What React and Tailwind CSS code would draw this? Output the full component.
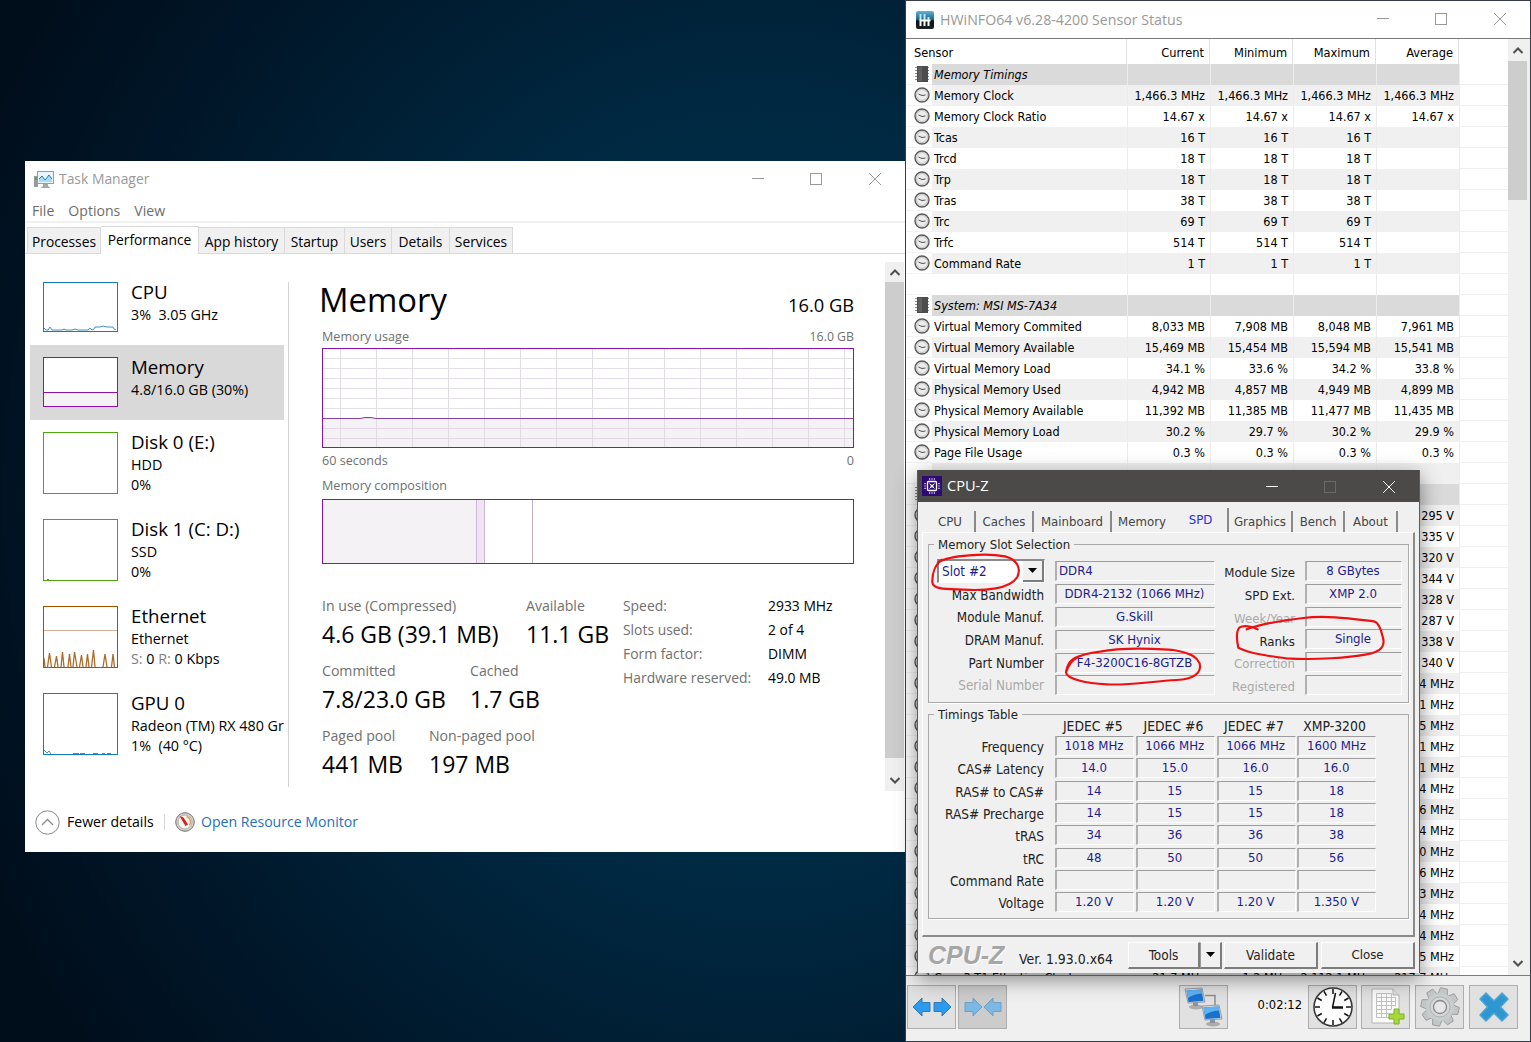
const tabs = [
  { label: 'Processes', width: 'w-[74px]' },
  { label: 'Performance', width: 'w-[98px]', active: true },
  { label: 'App history', width: 'w-[86px]' },
  { label: 'Startup', width: 'w-[60px]' },
  { label: 'Users', width: 'w-[47px]' },
  { label: 'Details', width: 'w-[58px]' },
  { label: 'Services', width: 'w-[63px]' },
];

// values: current, minimum, maximum, average
const sensorRows = [
  { header: true, name: 'Memory Timings' },
  { name: 'Memory Clock', values: ['1,466.3 MHz', '1,466.3 MHz', '1,466.3 MHz', '1,466.3 MHz'] },
  { name: 'Memory Clock Ratio', values: ['14.67 x', '14.67 x', '14.67 x', '14.67 x'] },
  { name: 'Tcas', values: ['16 T', '16 T', '16 T', ''] },
  { name: 'Trcd', values: ['18 T', '18 T', '18 T', ''] },
  { name: 'Trp', values: ['18 T', '18 T', '18 T', ''] },
  { name: 'Tras', values: ['38 T', '38 T', '38 T', ''] },
  { name: 'Trc', values: ['69 T', '69 T', '69 T', ''] },
  { name: 'Trfc', values: ['514 T', '514 T', '514 T', ''] },
  { name: 'Command Rate', values: ['1 T', '1 T', '1 T', ''] },
  { blank: true },
  { header: true, name: 'System: MSI MS-7A34' },
  { name: 'Virtual Memory Commited', values: ['8,033 MB', '7,908 MB', '8,048 MB', '7,961 MB'] },
  { name: 'Virtual Memory Available', values: ['15,469 MB', '15,454 MB', '15,594 MB', '15,541 MB'] },
  { name: 'Virtual Memory Load', values: ['34.1 %', '33.6 %', '34.2 %', '33.8 %'] },
  { name: 'Physical Memory Used', values: ['4,942 MB', '4,857 MB', '4,949 MB', '4,899 MB'] },
  { name: 'Physical Memory Available', values: ['11,392 MB', '11,385 MB', '11,477 MB', '11,435 MB'] },
  { name: 'Physical Memory Load', values: ['30.2 %', '29.7 %', '30.2 %', '29.9 %'] },
  { name: 'Page File Usage', values: ['0.3 %', '0.3 %', '0.3 %', '0.3 %'] },
  { blank: true },
  { header: true, name: '' },
  ...['295 V', '335 V', '320 V', '344 V', '328 V', '287 V', '338 V', '340 V',
    '4 MHz', '1 MHz', '5 MHz', '1 MHz', '1 MHz', '4 MHz', '6 MHz', '4 MHz',
    '0 MHz', '6 MHz', '3 MHz', '4 MHz', '4 MHz', '5 MHz'].map(v => ({ name: '', values: ['', '', '', v] })),
  { name: 'Core 3 T1 Effective Clock', values: ['21.7 MHz', '1.2 MHz', '2,112.1 MHz', '217.7 MHz'] },
];

const cpuzTabs = [
  { label: 'CPU', width: 'w-[50px]' },
  { label: 'Caches', width: 'w-[58px]' },
  { label: 'Mainboard', width: 'w-[78px]' },
  { label: 'Memory', width: 'w-[62px]' },
  { label: 'SPD', width: 'w-[55px]', active: true },
  { label: 'Graphics', width: 'w-[64px]' },
  { label: 'Bench', width: 'w-[52px]' },
  { label: 'About', width: 'w-[53px]' },
];

const slotRows = [
  ['Max Bandwidth', 'DDR4-2132 (1066 MHz)'],
  ['Module Manuf.', 'G.Skill'],
  ['DRAM Manuf.', 'SK Hynix'],
  ['Part Number', 'F4-3200C16-8GTZB'],
  ['Serial Number', '', true],
];

const moduleRows = [
  ['Module Size', '8 GBytes'],
  ['SPD Ext.', 'XMP 2.0'],
  ['Week/Year', '', true],
  ['Ranks', 'Single'],
  ['Correction', '', true],
  ['Registered', '', true],
];

const timings = [
  ['Frequency', '1018 MHz', '1066 MHz', '1066 MHz', '1600 MHz'],
  ['CAS# Latency', '14.0', '15.0', '16.0', '16.0'],
  ['RAS# to CAS#', '14', '15', '15', '18'],
  ['RAS# Precharge', '14', '15', '15', '18'],
  ['tRAS', '34', '36', '36', '38'],
  ['tRC', '48', '50', '50', '56'],
  ['Command Rate', '', '', '', ''],
  ['Voltage', '1.20 V', '1.20 V', '1.20 V', '1.350 V'],
];

function WindowControls({ className, dimMax }) {
  return (
    <div className={`flex gap-[46.5px] ${className}`}>
      <svg width="12" height="12" stroke="currentColor" fill="none"><path d="M0 5.5H12" /></svg>
      <svg width="12" height="12" stroke={dimMax ? '#6b6a68' : 'currentColor'} fill="none" className="relative -left-[0.5px]"><rect x="0.5" y="0.5" width="11" height="11" /></svg>
      <svg width="12" height="12" stroke="currentColor" fill="none"><path d="M0 0L12 12M12 0L0 12" /></svg>
    </div>
  );
}

function Chevron({ up }) {
  return (
    <svg width="10" height="7" fill="none" stroke="#505050" strokeWidth="2">
      <path d={up ? 'M0.5 6L5 1.5L9.5 6' : 'M0.5 1L5 5.5L9.5 1'} />
    </svg>
  );
}

function SideItem({ title, lines, color, tall, selected, children }) {
  return (
    <div className={`flex w-[254px] gap-[13px] pl-[13px] pt-3 whitespace-nowrap ${tall ? 'h-[87px]' : 'h-[75px]'} ${selected ? 'bg-[#d9d9d9]' : ''}`}>
      <svg width="75" height={tall ? 62 : 50} className="shrink-0" fill="none">
        <rect x="0.5" y="0.5" width="74" height={tall ? 61 : 49} fill="#fff" stroke={color} />
        {children}
      </svg>
      <div>
        <div className="text-[18.7px] leading-5 mb-[3px]">{title}</div>
        {lines.map((line, i) => <div key={i} className="text-[14.3px] leading-5 whitespace-pre">{line}</div>)}
      </div>
    </div>
  );
}

function Stat({ label, value, width }) {
  return (
    <div className={width}>
      <div className="text-[14.1px] leading-5 text-[#707070]">{label}</div>
      <div className="text-[23px] leading-[37px]">{value}</div>
    </div>
  );
}

function TaskManager() {
  return (
    <div className="absolute left-[25px] top-[161px] w-[881px] h-[691px] bg-white text-black font-['Open_Sans','Noto_Sans',sans-serif] flex flex-col whitespace-nowrap overflow-hidden">
      <div className="h-[37px] shrink-0 flex items-center pl-[9px] pr-[25px] text-[#999]">
        <svg width="20" height="18" viewBox="0 0 20 18">
          <rect x="0" y="5" width="4" height="11" fill="#9a9a9a" />
          <rect x="1" y="6" width="2" height="3" fill="#4caf50" />
          <rect x="3.5" y="0.5" width="16" height="12" fill="#e8f6fc" stroke="#9b9b9b" />
          <path d="M5 8l3-3 3 4 4-5 3 4v3H5z" fill="#a9dcf2" />
          <path d="M5 8l3-3 3 4 4-5 3 4" fill="none" stroke="#2a7db5" />
          <path d="M9 13h5v2l2.5 2h-10l2.5-2z" fill="#a8a8a8" />
        </svg>
        <span className="ml-[5px] text-[13.9px]">Task Manager</span>
        <WindowControls className="ml-auto relative top-[-1px]" />
      </div>
      <div className="h-[25px] shrink-0 flex items-center gap-[14px] pl-[7px] pt-[2px] text-[14.1px] text-[#6d6d6d] border-b-2 border-[#f0f0f0]">
        <span>File</span><span>Options</span><span>View</span>
      </div>
      <div className="h-[31px] shrink-0 flex items-end pl-[2px] border-b border-[#d9d9d9]">
        {tabs.map(t => (
          <div key={t.label} className={`${t.width} flex justify-center text-[13.8px] border-t border-r border-[#d9d9d9] ${t.active ? 'h-7 bg-white leading-[26px] -mb-px pb-px' : 'h-[26px] bg-[#f0f0f0] leading-[27px] first:border-l'}`}>{t.label}</div>
        ))}
      </div>

      <div className="flex h-[538px] shrink-0">
        {/* Resource list */}
        <div className="w-[263px] shrink-0 pt-4 pl-[5px] overflow-hidden">
          <SideItem title="CPU" lines={['3%  3.05 GHz']} color="#117dbb">
            <path d="M1 46l2 2 2 0 2-3 2 3 10 0 2-1 2 1h6l3-1 3 1h10l2-2 2 2 2-1 1-2h5l3-1 4 1h6l1 2 2 1" stroke="#3c93c4" />
          </SideItem>
          <SideItem title="Memory" lines={['4.8/16.0 GB (30%)']} color="#8b12ae" selected>
            <rect x="1" y="36" width="73" height="13" fill="#f4f2f4" />
            <path d="M1 35.5H74" stroke="#8b12ae" />
          </SideItem>
          <SideItem title="Disk 0 (E:)" lines={['HDD', '0%']} color="#4da60c" tall />
          <SideItem title="Disk 1 (C: D:)" lines={['SSD', '0%']} color="#4da60c" tall>
            <path d="M4 60.5h2" stroke="#4da60c" />
          </SideItem>
          <SideItem
            title="Ethernet"
            lines={['Ethernet', <><span className="text-[#808080]">S:</span> 0 <span className="text-[#808080]">R:</span> 0 Kbps</>]}
            color="#a74f01"
            tall
          >
            <path d="M1 24.5H74" stroke="#cfae9b" />
            <path
              d="M1 52l1 9M4.5 61l2-14 2 14M11.500 61l2-11 1.500 11M18 61l1.500-15L21 61M25 61l1.500-13L28 61M30 61l1.500-15L34 61M36.500 61l2-12 1.500 12M43 61l1.500-13L46 61M48.500 61l2-17 1.500 17M60 61l2-13 2 13M68.500 61l1.500-13 1.500 13"
              stroke="#b06a2c"
              strokeWidth="1.3"
            />
          </SideItem>
          <SideItem title="GPU 0" lines={['Radeon (TM) RX 480 Gr', '1%  (40 °C)']} color="#117dbb" tall>
            <path d="M1 57l3 3 2-2 2 3M30 60.5h6M37 60.5h5M50 60.5h5M59 60.5h3M64 60.5h4" stroke="#3c93c4" />
          </SideItem>
        </div>
        <div className="w-px h-[505px] mt-7 bg-[#d4d4d4]"></div>

        {/* Memory details */}
        <div className="w-[572px] pl-[33px] pr-[7px]">
          <div className="w-[532px]">
            <div className="h-[74px] flex justify-between">
              <div className="text-[32.8px] leading-[46px] mt-[23px] -ml-[3px]">Memory</div>
              <div className="text-[18.3px] leading-5 mt-[41px]">16.0 GB</div>
            </div>
            <div className="flex justify-between text-[12.6px] leading-[18px] text-[#707070] mb-[2px]">
              <span>Memory usage</span><span className="text-[12.3px]">16.0 GB</span>
            </div>
            <svg width="532" height="100" fill="none" className="block">
              <rect x="0" y="70" width="532" height="30" fill="#f4f2f4" />
              {[...Array(15)].map((_, i) => <path key={i} d={`M${18.5 + i * 36} 0V100`} stroke="#e0dce4" />)}
              {[...Array(9)].map((_, i) => <path key={i} d={`M0 ${10.5 + i * 10}H532`} stroke={i > 6 ? '#e6d3ea' : '#e4e0e7'} />)}
              <path d="M0 70.5H38L43 69.5H49L54 70.5H532" stroke="#8b3fa0" />
              <rect x="0.5" y="0.5" width="531" height="99" stroke="#8b12ae" />
            </svg>
            <div className="flex justify-between text-[12.6px] leading-[25px] text-[#707070]">
              <span>60 seconds</span><span>0</span>
            </div>
            <div className="text-[12.6px] leading-[25px] h-[26px] text-[#707070]">Memory composition</div>
            <div className="h-[65px] border border-[#8b12ae] flex">
              <div className="w-[154px] bg-[#f4f2f4] border-r border-[#cdb4d4]"></div>
              <div className="w-2 bg-[#f0e4f3] border-r border-[#cdb4d4]"></div>
              <div className="w-12 border-r border-[#bfb0c4]"></div>
            </div>
          </div>
          <div className="flex pt-8">
            <div className="w-[301px] flex flex-col gap-2">
              <div className="flex">
                <Stat label="In use (Compressed)" value="4.6 GB (39.1 MB)" width="w-[204px]" />
                <Stat label="Available" value="11.1 GB" />
              </div>
              <div className="flex">
                <Stat label="Committed" value="7.8/23.0 GB" width="w-[148px]" />
                <Stat label="Cached" value="1.7 GB" />
              </div>
              <div className="flex">
                <Stat label="Paged pool" value="441 MB" width="w-[107px]" />
                <Stat label="Non-paged pool" value="197 MB" />
              </div>
            </div>
            <div className="grid grid-cols-[145px_auto] auto-rows-[24px] content-start text-[13.9px] leading-5">
              <span className="text-[#707070]">Speed:</span><span>2933 MHz</span>
              <span className="text-[#707070]">Slots used:</span><span>2 of 4</span>
              <span className="text-[#707070]">Form factor:</span><span>DIMM</span>
              <span className="text-[#707070]">Hardware reserved:</span><span>49.0 MB</span>
            </div>
          </div>
        </div>

        <div className="w-[19px] ml-6 mt-2 h-[529px] bg-[#cdcdcd] flex flex-col justify-between">
          <div className="h-5 bg-[#f0f0f0] flex items-center justify-center"><Chevron up /></div>
          <div className="h-[33px] bg-[#f0f0f0] flex items-center justify-center pt-3"><Chevron /></div>
        </div>
      </div>

      <div className="flex items-center h-[60px] pl-[10px] text-[14.1px]">
        <svg width="25" height="25" fill="none" stroke="#8a8a8a">
          <circle cx="12.5" cy="12.5" r="11.7" />
          <path d="M7 15l5.5-5.5L18 15" strokeWidth="1.3" />
        </svg>
        <span className="ml-[7px] w-[87px]">Fewer details</span>
        <div className="w-px h-4 bg-[#d4d4d4] ml-[10px] mr-[10px]"></div>
        <svg width="20" height="20" viewBox="0 0 20 20">
          <circle cx="10" cy="10" r="9.3" fill="#cfd0cc" stroke="#777" />
          <circle cx="10" cy="10" r="7" fill="#f7f6ef" stroke="#b5b3a8" />
          <path d="M11.5 4.5a6 6 0 013 9" fill="none" stroke="#e0a070" strokeWidth="1.5" />
          <path d="M4.500 4L8.500 5.500l4.500 7-2.500 1.500z" fill="#d81e1e" />
        </svg>
        <span className="ml-[6px] text-[#1f6fc0]">Open Resource Monitor</span>
      </div>
    </div>
  );
}

function ClockIcon() {
  return (
    <svg width="16" height="16" viewBox="0 0 16 16" fill="none">
      <circle cx="8" cy="8" r="7" fill="#ececec" stroke="#5a5a5a" strokeWidth="1.4" />
      <circle cx="8" cy="8" r="5.5" stroke="#c4c4c4" />
      <path d="M4.500 7l3.500 1.500 3.500-.5" stroke="#555" />
    </svg>
  );
}

function ChipIcon() {
  return (
    <svg width="16" height="18" viewBox="0 0 16 18">
      <path d="M1 2.5h14M1 5.5h14M1 8.5h14M1 11.5h14M1 14.5h14" stroke="#8a8a8a" />
      <rect x="3" y="1" width="11" height="16" fill="#4c4c4c" />
      <rect x="4" y="2" width="4" height="14" fill="#606060" />
    </svg>
  );
}

function SensorRow({ row, odd }) {
  const bg = row.header ? 'bg-[#dadada]' : odd ? 'bg-[#f0f0f0]' : 'bg-white';
  const values = row.values || ['', '', '', ''];
  return (
    <div className="flex h-[21px] shrink-0 leading-[21px]">
      <div className="w-[26px] pl-2 flex items-center border-b border-[#f3f3f3]">
        {row.header ? <ChipIcon /> : row.blank ? null : <ClockIcon />}
      </div>
      <div className={`w-[196px] pl-[2px] border-r border-[#ececec] ${bg} ${row.header ? 'italic' : ''}`}>{row.name}</div>
      {values.map((v, i) => (
        <div key={i} className={`w-[83px] pr-[5px] text-right border-r border-[#ececec] ${bg}`}>{v}</div>
      ))}
      <div className="w-[48px] border-b border-[#efefef]"></div>
    </div>
  );
}

function ToolButton({ children, className = 'bg-[#e1e1e1]' }) {
  return (
    <div className={`w-[49px] h-11 border border-[#adadad] flex items-center justify-center shrink-0 ${className}`}>{children}</div>
  );
}

function Monitor({ x, y }) {
  return (
    <g transform={`translate(${x} ${y})`}>
      <ellipse cx="11" cy="19" rx="7" ry="2.5" fill="#a9adb0" />
      <path d="M8 13h5v5H8z" fill="#8d9296" />
      <path d="M0 1l17-1 3 14-17 1z" fill="#d9dde0" stroke="#868c92" strokeWidth="0.8" />
      <path d="M1.500 2.500l15-1 2 11.500-15 1z" fill="#1672cf" />
      <path d="M1.500 2.500l15-1 .8 4Q8 6 3 10z" fill="#5fb3f2" />
    </g>
  );
}

function HwInfo() {
  return (
    <div className="absolute left-[905px] top-0 w-[626px] h-[1042px] bg-[#f0f0f0] border border-[#363c48] text-black font-['DejaVu_Sans_Condensed','DejaVu_Sans',sans-serif] text-[12.5px] flex flex-col whitespace-nowrap overflow-hidden">
      <div className="h-[37px] shrink-0 bg-white flex items-center pl-[10px] pr-[24px] text-[#999] font-['Open_Sans','Noto_Sans',sans-serif]">
        <svg width="18" height="18" viewBox="0 0 18 18">
          <defs>
            <linearGradient id="hw" x1="0" y1="0" x2="0" y2="1">
              <stop offset="0" stopColor="#5fb6d8" />
              <stop offset="0.5" stopColor="#1c5f80" />
              <stop offset="0.55" stopColor="#0a1014" />
              <stop offset="1" stopColor="#1c2226" />
            </linearGradient>
          </defs>
          <rect width="18" height="18" rx="2" fill="url(#hw)" />
          <path d="M4.500 3v6.500M8.500 3v6.500M12.500 6v3.500" stroke="#bfe6f5" strokeWidth="2" />
          <path d="M4.500 9.500V15M8.500 9.500V15M12.500 9.500V15M3.500 9.500h11" stroke="#fff" strokeWidth="2" />
        </svg>
        <span className="ml-[6px] text-[14.2px]">HWiNFO64 v6.28-4200 Sensor Status</span>
        <WindowControls className="ml-auto relative top-[-1px]" />
      </div>

      <div className="h-[938px] shrink-0 flex border-y border-[#7b7b7b] bg-white">
        <div className="w-[602px] h-[936px] flex flex-col overflow-hidden">
          <div className="flex h-[25px] shrink-0 leading-[27px] text-[12.7px]">
            <div className="w-[221px] pl-2 border-r border-[#e2e2e2]">Sensor</div>
            {['Current', 'Minimum', 'Maximum', 'Average'].map(h => (
              <div key={h} className="w-[83px] pr-[5px] text-right border-r border-[#e2e2e2]">{h}</div>
            ))}
          </div>
          {sensorRows.map((row, i) => <SensorRow key={i} row={row} odd={i % 2 === 1} />)}
        </div>
        <div className="w-[19px] bg-[#f0f0f0] flex flex-col">
          <div className="h-[22px] flex items-center justify-center shrink-0"><Chevron up /></div>
          <div className="h-[139px] bg-[#cdcdcd] shrink-0"></div>
          <div className="mt-auto h-6 flex items-center justify-center"><Chevron /></div>
        </div>
        <div className="w-[3px] bg-[#f0f0f0]"></div>
      </div>

      {/* Toolbar */}
      <div className="flex pt-[9px] pl-px">
        <ToolButton>
          <svg width="40" height="22" viewBox="0 0 40 22" fill="#2b9bf0" stroke="#3a78aa">
            <path d="M1 11l9-9v4.500h8v9h-8V20z" />
            <path d="M39 11l-9-9v4.500h-8v9h8V20z" />
          </svg>
        </ToolButton>
        <ToolButton className="ml-[2px] bg-[#cccccc]">
          <svg width="38" height="22" viewBox="0 0 38 22" fill="#7db8e4" stroke="#6f9fc4">
            <path d="M18 11l-9-9v4.500H1v9h8V20z" />
            <path d="M20 11l9-9v4.500h8v9h-8V20z" />
          </svg>
        </ToolButton>
        <ToolButton className="ml-[172px] bg-[#e1e1e1]">
          <svg width="42" height="42" viewBox="0 0 42 42">
            <path d="M22 9.500h10V20" fill="none" stroke="#8f8f8f" strokeWidth="1.5" />
            <Monitor x="2" y="2" />
            <Monitor x="19" y="19" />
          </svg>
        </ToolButton>
        <div className="w-[80px] text-right pr-[6px] leading-[39px] text-[12.8px]">0:02:12</div>
        <ToolButton>
          <svg width="42" height="42" viewBox="0 0 42 42" fill="none" stroke="#111">
            <circle cx="21" cy="21" r="19" fill="#fff" stroke="#3a3a3a" strokeWidth="1.6" />
            {[...Array(12)].map((_, i) => <path key={i} d="M21 3v5" strokeWidth="1.5" transform={`rotate(${i * 30} 21 21)`} />)}
            <path d="M20.500 21.500L23.500 7" strokeWidth="1.5" />
            <path d="M20 21.500H31" strokeWidth="2.5" />
          </svg>
        </ToolButton>
        <ToolButton className="ml-1 bg-[#e1e1e1]">
          <svg width="42" height="42" viewBox="0 0 42 42">
            <path d="M7 3h21l6 6v28H7z" fill="#fafafa" stroke="#b5b5b5" />
            <path d="M28 3v6h6" fill="#e2e2e2" stroke="#b5b5b5" />
            <path d="M11.500 7.500h15M11.500 11.500h19M11.500 15.500h19M11.500 19.500h19M11.500 23.500h15M11.500 27.500h13M11.500 31.500h13M11.500 7.500v24M16.500 7.500v24M21.500 7.500v24M26.500 7.500v16M30.500 11.500v9" stroke="#c2c2c2" />
            <path d="M29 23h5v5h5v5h-5v5h-5v-5h-5v-5h5z" fill="#a5d83a" stroke="#7fae2b" />
          </svg>
        </ToolButton>
        <ToolButton className="ml-[5px] bg-[#e1e1e1]">
          <svg width="42" height="42" viewBox="0 0 42 42">
            <g fill="#c3c6c7" stroke="#919495" strokeWidth="0.8">
              {[...Array(8)].map((_, i) => <path key={i} d="M16 9.500l1.500-7.500h7L26 9.500z" transform={`rotate(${i * 45 + 12} 21 21)`} />)}
            </g>
            <circle cx="21" cy="21" r="14" fill="#c9cccd" />
            <circle cx="21" cy="21" r="10" fill="#d6d8d8" stroke="#b0b3b4" />
            <circle cx="21" cy="21" r="6.5" fill="#e6e6e6" stroke="#85888a" strokeWidth="1.3" />
          </svg>
        </ToolButton>
        <ToolButton className="ml-[5px] bg-[#e1e1e1]">
          <svg width="34" height="34" viewBox="0 0 34 34">
            <path d="M9 3l8 8 8-8 6 6-7.500 8 7.500 8-6 6-8-8-8 8-6-6 7.500-8L3 9z" fill="#2f96d0" stroke="#4aa5d8" strokeWidth="1.5" strokeLinejoin="round" />
          </svg>
        </ToolButton>
      </div>
    </div>
  );
}

function Field({ children, className = '' }) {
  return (
    <div className={`h-5 shrink-0 leading-[18px] text-[#1c1c8e] text-[13.1px] text-center border-t-[1.5px] border-l-2 border-t-[#9c9c9c] border-l-[#b0b0b0] border-r border-b border-r-white border-b-white bg-[#f0f0f0] ${className}`}>{children}</div>
  );
}

function Legend({ children }) {
  return <div className="-mt-[9px] ml-[5px] px-1 h-[18px] leading-[18px] bg-[#f0f0f0] w-fit">{children}</div>;
}

function PushButton({ children, className = '' }) {
  return (
    <div className={`h-[27px] leading-6 text-center border-t border-l border-t-white border-l-white border-r-2 border-b-2 border-r-[#7d7d7d] border-b-[#7d7d7d] ${className}`}>{children}</div>
  );
}

function CpuZ() {
  return (
    <div className="absolute left-[917px] top-[470px] w-[503px] h-[503px] bg-[#f0f0f0] border-x border-[#5a5a5a] shadow-[0_6px_20px_rgba(0,0,0,0.45)] text-[#222] font-['DejaVu_Sans_Condensed','DejaVu_Sans',sans-serif] text-[13.1px] flex flex-col whitespace-nowrap">
      <div className="h-8 shrink-0 bg-[#4b4a48] text-white flex items-center pl-1 pr-[24px] font-['Open_Sans','Noto_Sans',sans-serif]">
        <svg width="20" height="20" viewBox="0 0 20 20" fill="none">
          <rect width="20" height="20" fill="#2e0a73" />
          <rect x="5.5" y="5.5" width="9" height="9" rx="1" stroke="#fff" strokeWidth="1.3" />
          <path d="M7 3h6M7 17h6M3 7v6M17 7v6" stroke="#d8ccf0" strokeWidth="1.5" strokeDasharray="1.2 1.2" />
          <circle cx="10" cy="10" r="1.5" fill="#fff" />
          <path d="M7.500 7.500l5 5M12.500 7.500l-5 5" stroke="#fff" />
        </svg>
        <span className="ml-[5px] text-[14.6px]">CPU-Z</span>
        <WindowControls className="ml-auto relative top-[0.5px]" dimMax />
      </div>

      <div className="h-[30px] shrink-0 flex items-end pl-2 text-[#444]">
        {cpuzTabs.map(t => (
          <div key={t.label} className={`${t.width} text-center border-r-2 border-[#8a8a8a] ${t.active ? 'h-6 leading-[23px] text-[#2a2adf]' : 'h-[21px] leading-[21px]'} ${t.label === 'Memory' ? 'border-r-transparent' : ''}`}>{t.label}</div>
        ))}
      </div>

      <div className="ml-1 w-[493px] h-[405px] shrink-0 border-t border-l border-t-white border-l-white border-r-2 border-b-2 border-r-[#8a8a8a] border-b-[#8a8a8a] pt-[11px] pl-[5px]">
        <div className="w-[481px] h-[159px] border border-[#a9a9a9] shadow-[1px_1px_0_#fff]">
          <Legend>Memory Slot Selection</Legend>
          <div className="flex mt-[7px] justify-between pr-[6px]">
            <div className="flex flex-col gap-[2.7px]">
              <div className="flex items-center h-5 mb-[0.8px]">
                <div className="ml-2 w-[108px] h-6 border border-t-2 border-l-2 border-[#8a8a8a] border-r-white border-b-white bg-white flex justify-between">
                  <span className="pl-[3px] leading-[22px] text-[#1c1c8e] text-[13.4px]">Slot #2</span>
                  <div className="w-[21px] bg-[#f0f0f0] border-r-2 border-b-2 border-[#7d7d7d] flex items-center justify-center">
                    <svg width="9" height="5"><path d="M0 0h9L4.500 5z" fill="#000" /></svg>
                  </div>
                </div>
                <Field className="w-[160px] ml-[10px] !text-left pl-[2px]">DDR4</Field>
              </div>
              {slotRows.map(([label, value, off]) => (
                <div key={label} className="flex items-center">
                  <span className={`w-[115px] text-right relative top-px text-[13.3px] ${off ? 'text-[#a9a9a9]' : ''}`}>{label}</span>
                  <Field className="w-[160px] ml-[11px] pr-[2px]">{value}</Field>
                </div>
              ))}
            </div>
            <div className="flex flex-col gap-[2.8px]">
              {moduleRows.map(([label, value, off]) => (
                <div key={label} className="flex items-center">
                  <span className={`w-[80px] text-right relative top-[2px] ${off ? 'text-[#a9a9a9]' : ''}`}>{label}</span>
                  <Field className="w-[97px] ml-[10px] pr-[2px]">{value}</Field>
                </div>
              ))}
            </div>
          </div>
        </div>

        <div className="w-[481px] h-[205px] mt-[11px] border border-[#a9a9a9] shadow-[1px_1px_0_#fff]">
          <Legend>Timings Table</Legend>
          <div className="flex pl-[125px] -mt-[7px] h-[19px] leading-[18px]">
            {['JEDEC #5', 'JEDEC #6', 'JEDEC #7', 'XMP-3200'].map(h => (
              <span key={h} className="w-[80.6px] text-center pr-[3px] text-[13.8px]">{h}</span>
            ))}
          </div>
          <div className="flex flex-col gap-[2.35px]">
            {timings.map(([label, ...vals]) => (
              <div key={label} className="flex items-center h-5">
                <span className="w-[115px] text-right relative top-px mr-[11px] text-[13.5px]">{label}</span>
                {vals.map((v, i) => <Field key={i} className="w-[79px] mr-[1.8px] pr-[2px]">{v}</Field>)}
              </div>
            ))}
          </div>
        </div>
      </div>

      <div className="flex h-9 items-center pl-[10px]">
        <span className="w-[91px] font-['Liberation_Sans',sans-serif] font-bold italic text-[25px] leading-9 text-[#a6a6a6] [text-shadow:1px_1px_0_#fff]">CPU-Z</span>
        <span className="w-[109px] relative top-1 text-[13.9px]">Ver. 1.93.0.x64</span>
        <PushButton className="w-[72px] text-[13.5px]">Tools</PushButton>
        <PushButton className="w-[22px] flex justify-center items-center !border-l-[#9a9a9a]">
          <svg width="9" height="5"><path d="M0 0h9L4.500 5z" fill="#000" /></svg>
        </PushButton>
        <PushButton className="w-[94px] ml-[2px] text-[13.5px]">Validate</PushButton>
        <PushButton className="w-[94px] ml-[3px]">Close</PushButton>
      </div>
    </div>
  );
}

// Hand-drawn red circles over the CPU-Z values
function Annotations() {
  return (
    <svg viewBox="0 0 1560 750" className="absolute left-[910px] top-[465px] w-[520px] h-[250px]" fill="none" stroke="#ec1010" strokeWidth="6.5" strokeLinecap="round" strokeLinejoin="round">
      <path d="M84 292C120 270 230 264 285 274C322 284 334 310 322 336C300 372 225 378 160 374C110 372 70 374 67 352C66 325 76 298 96 284" />
      <path d="M470 618C480 585 500 568 570 560C650 544 740 552 790 555C850 565 862 580 869 595C876 625 850 643 800 645C720 650 650 662 590 658C530 655 470 642 468 622C472 598 480 578 520 570" />
      <path d="M1043 493C1025 483 1000 480 988 488C978 500 980 525 985 548C1020 566 1070 572 1130 580C1220 586 1320 577 1370 568C1418 560 1426 540 1418 515C1412 488 1405 472 1392 469C1330 462 1250 450 1180 459C1120 466 1060 474 1010 493" />
    </svg>
  );
}

export default function App() {
  return (
    <div className="relative w-[1531px] h-[1042px] overflow-hidden bg-[#001526] bg-[radial-gradient(ellipse_850px_900px_at_760px_500px,#003553_0%,#002841_45%,#00182b_75%,#000e1c_100%)]">
      <TaskManager />
      <HwInfo />
      <CpuZ />
      <Annotations />
    </div>
  );
}
